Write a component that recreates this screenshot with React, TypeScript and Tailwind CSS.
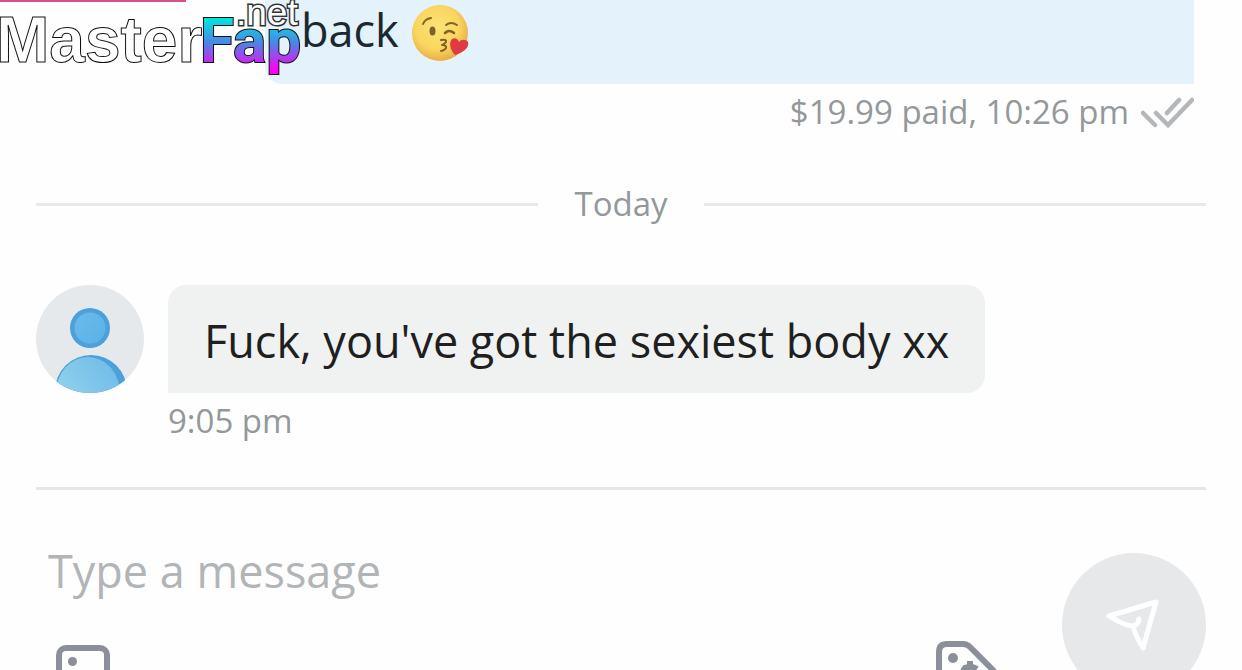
import React, { FC } from 'react';

const Watermark: FC = () => (
    <svg
        className="absolute top-0 left-0 z-10"
        width="306"
        height="84"
        viewBox="0 0 306 84"
        role="img"
        aria-label="MasterFap.net"
        fontFamily="'Liberation Sans', Arial, sans-serif"
        fontWeight="700"
    >
        <defs>
            <linearGradient id="fap" gradientUnits="userSpaceOnUse" x1="0" y1="16" x2="0" y2="76">
                <stop offset="0.05" stopColor="#00e5dc" />
                <stop offset="0.45" stopColor="#4b85e6" />
                <stop offset="0.9" stopColor="#ff00f5" />
            </linearGradient>
        </defs>
        <rect width="186" height="2" fill="#dc4d8b" />
        <text x="-4" y="62" fontSize="64" fill="#fff" stroke="#111" strokeWidth="1">
            Master
        </text>
        <text x="200" y="62" fontSize="62" fontFamily="Roboto, sans-serif" fill="url(#fap)" stroke="#111" strokeWidth="2" paintOrder="stroke">
            Fap
        </text>
        <text x="236" y="25" fontSize="37" fontWeight="400" fill="#fff" stroke="#333" strokeWidth="3" paintOrder="stroke">
            .net
        </text>
    </svg>
);

const KissEmoji: FC = () => (
    <svg width="58" height="60" viewBox="-1 -4 58 60" className="overflow-visible" role="img" aria-label="Kiss">
        <defs>
            <radialGradient id="face" cx="0.45" cy="0.4" r="0.6">
                <stop offset="0" stopColor="#fce277" />
                <stop offset="0.65" stopColor="#f9d65f" />
                <stop offset="1" stopColor="#e9ad45" />
            </radialGradient>
        </defs>
        <circle cx="28" cy="29" r="28" fill="url(#face)" />
        <g fill="none" stroke="#80612a" strokeLinecap="round" strokeLinejoin="round">
            <path d="M11 20q2-5 8-6" strokeWidth="2" />
            <path d="M34 21q5-4 11 0" strokeWidth="2" />
            <path d="M33 29q4-4 9 0" strokeWidth="2.5" />
            <path d="M29 36q6-1 5 2q-1 2-4 3q5 0 4 3q-1 2-5 3" strokeWidth="2" />
        </g>
        <ellipse cx="20.500" cy="27" rx="3" ry="4.500" fill="#80612a" />
        <path
            d="M43 51C39 47 36 39 40 35c3-2 6 0 7 3 2-3 7-3 9 0 2 5-5 11-13 13z"
            fill="#df3b40"
        />
    </svg>
);

const ReadIcon: FC = () => (
    <svg width="53" height="32" viewBox="0 0 53 32" fill="none" stroke="#b3b7b9" strokeWidth="4.5" strokeLinecap="round" aria-hidden="true">
        <path d="M2 17l12 12M15 17l12 12L51 4M26 17L38 4" />
    </svg>
);

const Avatar: FC = () => (
    <svg className="shrink-0" width="108" height="108" viewBox="0 0 108 108" role="img" aria-label="User">
        <defs>
            <clipPath id="round">
                <circle cx="54" cy="54" r="54" />
            </clipPath>
            <linearGradient id="head" x1="0" y1="0" x2="1" y2="1">
                <stop offset="0" stopColor="#6cbbe9" />
                <stop offset="1" stopColor="#59b1e9" />
            </linearGradient>
            <linearGradient id="body" x1="1" y1="0" x2="0.3" y2="0.6">
                <stop offset="0" stopColor="#6bb9e7" />
                <stop offset="1" stopColor="#8dceec" />
            </linearGradient>
        </defs>
        <g clipPath="url(#round)">
            <rect width="108" height="108" fill="#e6e9eb" />
            <circle cx="54" cy="43" r="20" fill="#4ca1dc" />
            <circle cx="54" cy="43" r="15.500" fill="url(#head)" />
            <circle cx="55" cy="106" r="36" fill="#4ca1dc" />
            <ellipse cx="52" cy="108" rx="32" ry="36" fill="url(#body)" />
        </g>
    </svg>
);

const SendIcon: FC = () => (
    <svg width="56" height="56" viewBox="0 0 56 56" fill="none" stroke="#fff" strokeWidth="5" strokeLinecap="round" strokeLinejoin="round" aria-hidden="true">
        <path d="M3 19L50 5L37 51C32 43 29 37 27 29C21 29 11 24 3 19zM27 29Q33 27 33 22" />
    </svg>
);

const ImageIcon: FC = () => (
    <svg width="54" height="54" viewBox="0 0 54 54" fill="none" stroke="#8a8f99" strokeWidth="6" aria-hidden="true">
        <rect x="3" y="3" width="48" height="48" rx="7" />
        <circle cx="16.500" cy="16.500" r="4.500" fill="#8a8f99" stroke="none" />
        <path d="M5 48l14-12 9 7 10-12 12 14" />
    </svg>
);

const TagIcon: FC = () => (
    <svg width="62" height="62" viewBox="0 0 62 62" fill="none" stroke="#8a8f99" strokeWidth="6" strokeLinejoin="round" aria-hidden="true">
        <path d="M3 35V11Q3 3 11 3H27Q31 3 34 6L57 29Q61 34 57 38L38 57Q34 61 29 57L6 40Q3 38 3 35z" />
        <circle cx="17" cy="17" r="5" fill="#8a8f99" stroke="none" />
        <path d="M34 20v30M41 28q-6-4-12-1c-4 4 0 7 5 7s8 3 6 7q-5 4-12-1" />
    </svg>
);

const DayDivider: FC<{ title: string }> = ({ title }) => (
    <div className="flex items-center gap-9 mt-11 text-[33px] leading-12 text-[#93989b]">
        <div className="h-[3px] flex-1 bg-[#e6e8ea]" />
        <span>{title}</span>
        <div className="h-[3px] flex-1 bg-[#e6e8ea]" />
    </div>
);

const App: FC = () => {
    return (
        <div className="relative h-screen overflow-hidden bg-[#fefefe] px-9 font-['Open_Sans','Noto_Sans',sans-serif]">
            <Watermark />
            <div className="ml-[229px] mr-3">
                <div className="flex items-center gap-3 rounded-bl-[18px] bg-[#e3f2fb] px-9 pb-6 text-[45px] leading-15 text-[#1c2830]">
                    <span>back</span>
                    <KissEmoji />
                </div>
                <div className="flex items-center justify-end gap-3 pt-1 text-[33px] leading-12 text-[#93989b]">
                    <span>$19.99 paid, 10:26 pm</span>
                    <ReadIcon />
                </div>
            </div>

            <DayDivider title="Today" />

            <div className="mt-[57px] flex items-start gap-6">
                <Avatar />
                <div>
                    <div className="rounded-[18px] rounded-bl-none bg-[#f0f2f2] px-9 pt-[26px] pb-[22px] text-[45px] leading-15 text-[#1f1f1f]">
                        Fuck, you've got the sexiest body xx
                    </div>
                    <div className="pt-1 text-[33px] leading-12 text-[#93989b]">9:05 pm</div>
                </div>
            </div>

            <form className="mt-[42px] border-t-3 border-[#e4e6e8]" onSubmit={(e) => e.preventDefault()}>
                <div className="flex items-start pt-[51px]">
                    <div className="min-w-0 flex-1">
                        <input
                            type="text"
                            aria-label="Type a message"
                            placeholder="Type a message"
                            className="block h-15 w-full px-3 text-[45px] leading-15 outline-none placeholder:text-[#b2b5b8]"
                        />
                        <div className="mt-10 flex items-start justify-between pr-16 pl-5">
                            <button type="button" aria-label="Add image" className="mt-1">
                                <ImageIcon />
                            </button>
                            <button type="button" aria-label="Set price">
                                <TagIcon />
                            </button>
                        </div>
                    </div>
                    <button
                        type="submit"
                        aria-label="Send"
                        className="mt-3 flex size-36 shrink-0 items-center justify-center rounded-full bg-[#e6e8ea]"
                    >
                        <SendIcon />
                    </button>
                </div>
            </form>
        </div>
    );
};

export default App;
